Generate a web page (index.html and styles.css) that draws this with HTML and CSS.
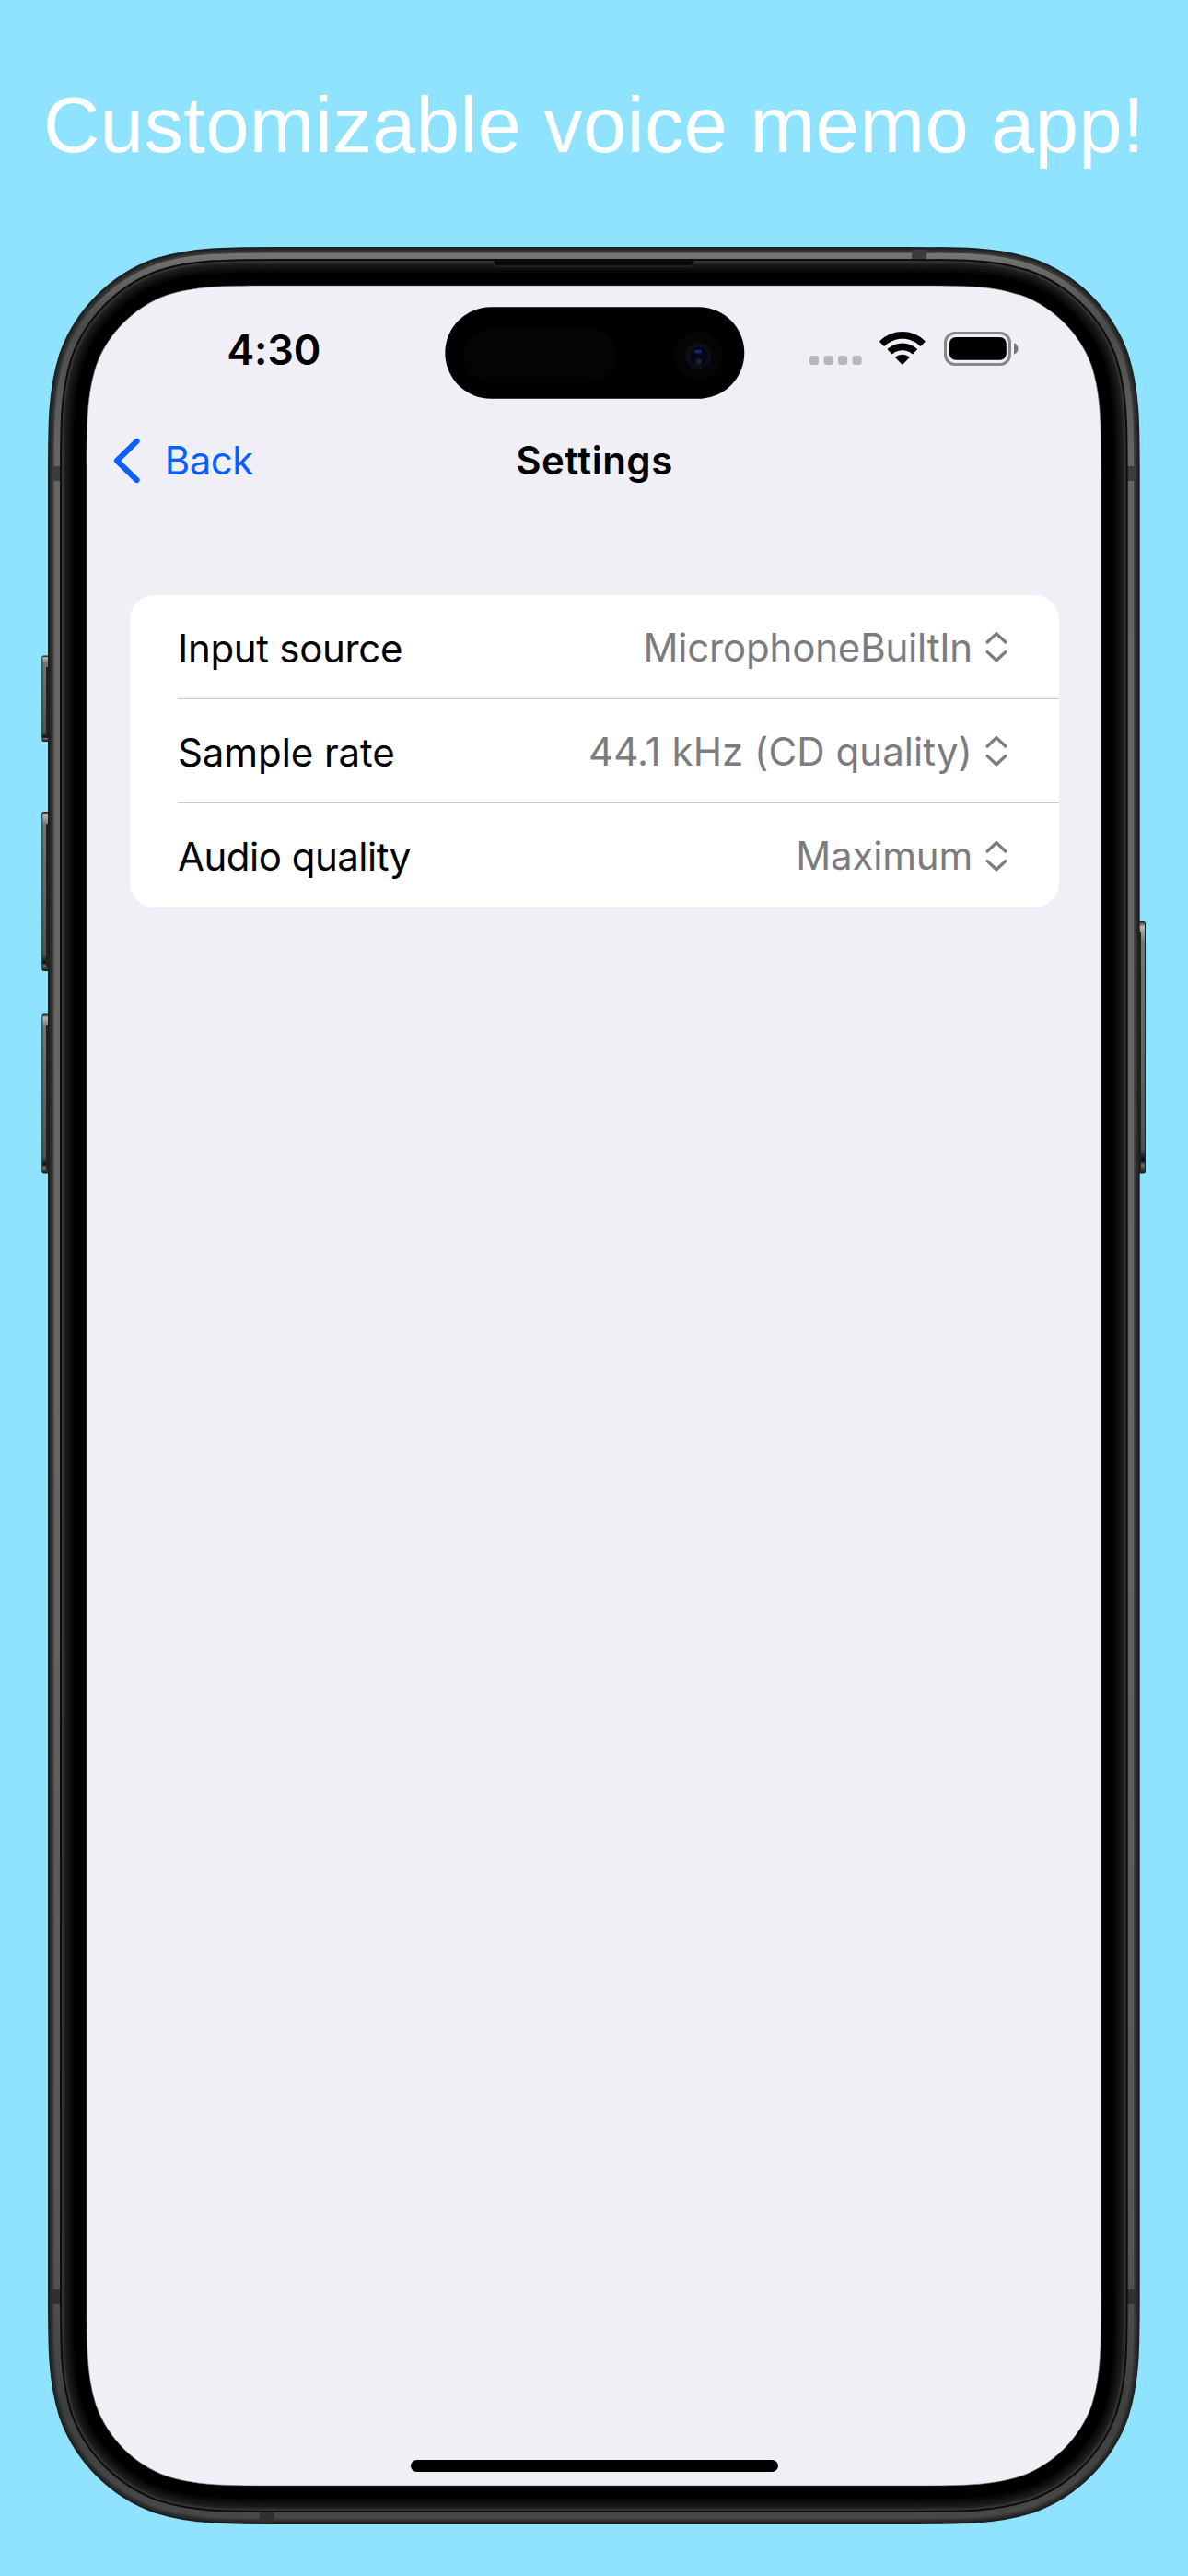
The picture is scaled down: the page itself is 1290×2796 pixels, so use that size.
FILE: index.html
```html
<!DOCTYPE html>
<html lang="en">
<head>
<meta charset="utf-8">
<title>Settings</title>
<link rel="stylesheet" href="styles.css">
</head>
<body>
<main class="poster">
  <h1 class="headline">Customizable voice memo app!</h1>

  <div class="phone">
    <svg class="frame" viewBox="40 260 1210 2490" width="1210" height="2490" aria-hidden="true">
      <defs>
        <path id="edge" d="M305 310 H984.7 C1045.500 310 1075.900 310 1103.200 319 L1108.600 320.300 C1144.200 333.300 1172.400 361.500 1185.400 397.100 C1195.700 429.800 1195.700 460.200 1195.700 521 V2487 C1195.700 2547.800 1195.700 2578.200 1185.400 2610.900 C1172.400 2646.500 1144.200 2674.700 1108.600 2687.700 C1075.900 2698 1045.500 2698 984.700 2698 H305 C244.200 2698 213.800 2698 181.100 2687.700 C145.500 2674.700 117.300 2646.500 104.300 2610.900 C94 2578.200 94 2547.800 94 2487 V521 C94 460.200 94 429.800 104.300 397.100 C117.300 361.500 145.500 333.300 181.100 320.300 C213.800 310 244.200 310 305 310 Z"/>
        <linearGradient id="steel" gradientUnits="userSpaceOnUse" x1="0" y1="268" x2="0" y2="2740">
          <stop offset="0" stop-color="#7d7b77"/>
          <stop offset=".01" stop-color="#6a6866"/>
          <stop offset=".035" stop-color="#4a4a49"/>
          <stop offset=".09" stop-color="#676563"/>
          <stop offset=".5" stop-color="#686664"/>
          <stop offset=".88" stop-color="#555"/>
          <stop offset=".95" stop-color="#3e3f3f"/>
          <stop offset="1" stop-color="#484848"/>
        </linearGradient>
        <linearGradient id="key" x1="0" y1="0" x2="0" y2="1">
          <stop offset="0" stop-color="#33322f"/>
          <stop offset=".02" stop-color="#b9b7af"/>
          <stop offset=".08" stop-color="#77746f"/>
          <stop offset=".9" stop-color="#55524e"/>
          <stop offset=".95" stop-color="#0c0c0c"/>
          <stop offset=".97" stop-color="#77746f"/>
          <stop offset="1" stop-color="#111"/>
        </linearGradient>
      </defs>
      <g fill="url(#key)" stroke="#22211f" stroke-width="1">
        <rect x="45.800" y="712" width="9" height="92.500" rx="1.500"/>
        <rect x="45.800" y="881.500" width="9" height="172" rx="1.500"/>
        <rect x="45.800" y="1101" width="9" height="172" rx="1.500"/>
        <rect x="1234" y="1000.500" width="9.500" height="272.500" rx="1.500"/>
      </g>
      <g fill="#22211f">
        <rect x="50" y="724" width="3" height="77"/>
        <rect x="50" y="894" width="3" height="156"/>
        <rect x="50" y="1113" width="3" height="157"/>
        <rect x="1237" y="1012" width="2" height="258"/>
      </g>
      <g fill="none">
        <use href="#edge" stroke="#1c1f1f" stroke-width="84"/>
        <use href="#edge" stroke="#2a2c2c" stroke-width="80"/>
        <use href="#edge" stroke="#3a3b3b" stroke-width="75"/>
        <use href="#edge" stroke="url(#steel)" stroke-width="71"/>
        <g fill="#3a3d3d">
          <rect x="990" y="271" width="16" height="10"/>
          <rect x="56" y="506" width="10" height="16"/>
          <rect x="1224" y="506" width="10" height="16"/>
          <rect x="56" y="2485" width="10" height="16" fill="#2f3131"/>
          <rect x="1224" y="2485" width="10" height="16" fill="#2f3131"/>
          <rect x="282" y="2727" width="16" height="10" fill="#2f3131"/>
        </g>
        <use href="#edge" stroke="#0c0c0c" stroke-width="58"/>
        <use href="#edge" stroke="#333" stroke-width="54"/>
        <use href="#edge" stroke="#222" stroke-width="50"/>
        <use href="#edge" stroke="#181818" stroke-width="46"/>
        <use href="#edge" stroke="#101010" stroke-width="40"/>
        <use href="#edge" stroke="#070707" stroke-width="34"/>
        <use href="#edge" stroke="#000" stroke-width="28"/>
        <path d="M535 282 L539 289 H750 L754 282 Z" fill="#0b0b0b"/>
        <path d="M535 283 L537.500 287.500 Q538.500 289 541 289 H749 Q751 289 752 287.500 L755 283" stroke="#2b2b2b"/>
      </g>
      <use href="#edge" fill="#f0eff6" stroke="#66656a" stroke-width=".6"/>
    </svg>

    <section class="screen">
      <div class="statusbar">
        <time class="clock">4:30</time>
        <svg class="island" viewBox="0 0 326 100" width="326" height="100">
          <rect x=".3" y=".2" width="325" height="99.600" rx="49.800"/>
          <rect x="20.500" y="24.500" width="166" height="57" rx="28" fill="#040404"/>
          <circle cx="275" cy="53" r="26" fill="#060506"/>
          <circle cx="275.500" cy="53" r="14" fill="#0d0d18"/>
          <circle cx="275.500" cy="53" r="10" fill="#05051a"/>
          <ellipse cx="275" cy="48.500" rx="4" ry="2" fill="#232463"/>
          <circle cx="276" cy="59" r="3" fill="#0b2a35"/>
          <ellipse cx="276" cy="61.500" rx="2.500" ry="1" fill="#3a0f50"/>
        </svg>
        <div class="indicators">
          <svg class="cellular" viewBox="0 0 57 10" width="57" height="10" fill="#b7b6bc">
            <rect width="10" height="10" rx="3"/><rect x="15.600" width="10" height="10" rx="3"/><rect x="31" width="10" height="10" rx="3"/><rect x="46.600" width="10" height="10" rx="3"/>
          </svg>
          <svg class="wifi" viewBox="0 0 50 36" width="50" height="36">
            <path d="M.4 11.200 Q-.2 10.600 .4 10 C14-3.300 36-3.300 49.300 10 Q49.900 10.600 49.300 11.200 L45.200 15.400 Q44.500 16 43.800 15.400 C33 5.300 17 5.300 5.900 15.400 Q5.200 16 4.500 15.400 Z"/>
            <path d="M9 19.700 Q8.500 19.100 9 18.600 C18 10.400 31.700 10.400 40.700 18.600 Q41.200 19.100 40.700 19.700 L36.600 23.900 Q36 24.500 35.200 23.900 C29.500 19 20.200 19 14.500 23.900 Q13.700 24.500 13.100 23.900 Z"/>
            <path d="M17.500 28.400 Q17 27.800 17.500 27.300 C21.700 23.900 28 23.900 32.200 27.300 Q32.700 27.800 32.200 28.400 L25.600 35.200 Q24.850 35.900 24.100 35.200 Z"/>
          </svg>
          <svg class="battery" viewBox="0 0 81 37" width="81" height="37">
            <rect x="1.500" y="1.500" width="70" height="34" rx="10.500" fill="none" stroke="#87868b" stroke-width="3"/>
            <rect x="5.800" y="6" width="62" height="24.800" rx="7"/>
            <path d="M76 12.300 C82 14.500 82 22.500 76 24.700 Z" fill="#77767b"/>
          </svg>
        </div>
      </div>

      <nav class="navbar">
        <a class="back">
          <svg viewBox="0 0 29 50" width="29" height="50"><path d="M25.500 4 L4 25 L25.500 46" fill="none" stroke="#0a60ff" stroke-width="6.200" stroke-linecap="round" stroke-linejoin="round"/></svg>
          <span>Back</span>
        </a>
        <h2 class="title">Settings</h2>
      </nav>

      <ul class="card">
        <li class="row">
          <span class="label label-source">Input source</span>
          <span class="value value-source">MicrophoneBuiltIn</span>
          <svg class="picker" viewBox="0 0 24 34" width="24" height="34"><path d="M2.200 12 L12 2.600 L21.800 12 M2.200 22.600 L12 31.800 L21.800 22.600"/></svg>
        </li>
        <li class="row">
          <span class="label label-rate">Sample rate</span>
          <span class="value value-rate">44.1 kHz (CD quality)</span>
          <svg class="picker" viewBox="0 0 24 34" width="24" height="34"><path d="M2.200 12 L12 2.600 L21.800 12 M2.200 22.600 L12 31.800 L21.800 22.600"/></svg>
        </li>
        <li class="row">
          <span class="label label-quality">Audio quality</span>
          <span class="value value-quality">Maximum</span>
          <svg class="picker" viewBox="0 0 24 34" width="24" height="34"><path d="M2.200 12 L12 2.600 L21.800 12 M2.200 22.600 L12 31.800 L21.800 22.600"/></svg>
        </li>
      </ul>

      <div class="home-indicator"></div>
    </section>
  </div>
</main>
</body>
</html>
```
FILE: styles.css
```css
* {
  box-sizing: border-box;
  margin: 0;
  padding: 0;
}

body {
  background: #8fe3ff;
  color: #000;
  font-family: Inter, "Liberation Sans", sans-serif;
}

svg {
  display: block;
  flex: none;
}

.poster {
  width: 1290px;
  height: 2796px;
  overflow: hidden;
  display: flex;
  flex-direction: column;
}

.headline {
  height: 268px;
  padding: 88px 0 0 47px;
  color: #fff;
  font: 400 85px/95px "Liberation Sans", Arial, sans-serif;
  letter-spacing: 0.36px;
  white-space: nowrap;
}

.phone {
  position: relative;
  width: 1186px;
  height: 2472px;
  margin-left: 52px;
  padding: 42px;
}

/* hardware body drawn behind the screen, buttons overhang the box */
.frame {
  position: absolute;
  left: -12px;
  top: -8px;
}

.screen {
  position: relative;
  height: 2388px;
  display: flex;
  flex-direction: column;
}

.statusbar {
  height: 139px;
  padding-top: 23px;
  display: grid;
  grid-template-columns: 389px 326px 1fr;
  align-items: start;
}

.clock {
  margin-top: 19px;
  padding-left: 152.3px;
  font-size: 45px;
  font-weight: 600;
  line-height: 55px;
  letter-spacing: -0.15px;
}

.indicators {
  display: flex;
  align-items: flex-end;
  margin-top: 27px;
  padding-left: 70px;
}

.cellular {
  margin-bottom: 1px;
}

.wifi {
  margin: 0 19.5px 1px 19px;
}

.navbar {
  height: 101px;
  display: grid;
  grid-template-columns: 466.2px 1fr;
  align-items: center;
  font-size: 42px;
  line-height: 51px;
}

.back {
  display: flex;
  align-items: center;
  gap: 26.7px;
  padding-left: 29px;
  color: #0a60ff;
  letter-spacing: -0.5px;
}

.title {
  font-size: 42px;
  font-weight: 600;
  letter-spacing: 0.5px;
}

.card {
  width: 1009px;
  margin: 96px 0 0 47px;
  border-radius: 27px;
  background: #fff;
  list-style: none;
}

.row {
  height: 113px;
  margin-left: 52px;
  padding-right: 56px;
  display: flex;
  align-items: center;
  border-bottom: 1px solid #c6c6c8;
  font-size: 42px;
  line-height: 51px;
}

.row:last-child {
  border-bottom: 0;
}

.label {
  flex: 1;
  padding-top: 2px;
}

.value {
  margin-right: 14px;
  color: #7c7b80;
}

.label-source { letter-spacing: -0.32px; }
.label-rate { letter-spacing: -0.09px; }
.label-quality { letter-spacing: -0.5px; }
.value-source { letter-spacing: -0.18px; }
.value-rate { letter-spacing: 0.07px; }
.value-quality { letter-spacing: -0.2px; }

.picker {
  fill: none;
  stroke: #7c7b80;
  stroke-width: 3.3;
  stroke-linecap: round;
  stroke-linejoin: round;
}

.home-indicator {
  width: 399px;
  height: 13px;
  margin: auto auto 15px;
  border-radius: 7px;
  background: #000;
}
```
